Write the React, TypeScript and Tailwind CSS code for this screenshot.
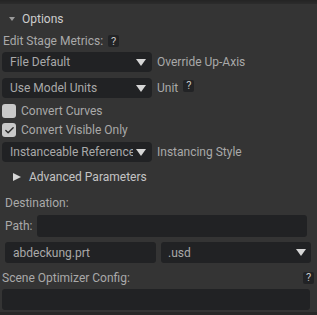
import { Check } from 'lucide-react';

const Arrow = () => (
  <svg width="10" height="7" viewBox="0 0 10 7" className="shrink-0">
    <path d="M0 0 L10 0 L5 7 Z" fill="#d6d6d6" />
  </svg>
);

const Help = () => (
  <span className="inline-flex h-[12px] w-[11px] items-center justify-center rounded-[2px] bg-[#222325] text-[11px] leading-none text-[#c8c8c8]">
    ?
  </span>
);

function Combo({ text, width = 'w-[150px]' }: { text: string; width?: string }) {
  return (
    <div className={`${width} flex h-[20px] shrink-0 items-center gap-[3px] rounded-[4px] bg-[#212224] pl-[8px] pr-[6px]`}>
      <span className="min-w-0 flex-1 overflow-hidden whitespace-nowrap">{text}</span>
      <Arrow />
    </div>
  );
}

function Box({ checked }: { checked?: boolean }) {
  return (
    <span className="flex h-[14px] w-[14px] items-center justify-center rounded-[3px] bg-[#c9c9c9]">
      {checked && <Check size={11} strokeWidth={3} color="#2a2a2a" />}
    </span>
  );
}

export default function App() {
  return (
    <div
      className="flex h-[315px] w-[317px] flex-col overflow-hidden bg-[#343434] text-[12px] text-[#a9a9a9]"
      style={{ fontFamily: 'Roboto, "Liberation Sans", sans-serif' }}
    >
      <div className="h-[4px] shrink-0 bg-gradient-to-b from-[#242424] to-[#2c2c2c]" />

      <div className="mt-[8px] flex h-[14px] items-center gap-[7px] pl-[9px] text-[#cdcdcd]">
        <svg width="6" height="4" viewBox="0 0 6 4">
          <path d="M0 0 L6 0 L3 4 Z" fill="#9a9a9a" />
        </svg>
        <span>Options</span>
      </div>

      <div className="mt-[9px] flex h-[12px] items-center gap-[5px] pl-[3px]">
        <span>Edit Stage Metrics:</span>
        <Help />
      </div>

      <div className="mt-[5px] flex items-center gap-[5px] pl-[2px]">
        <Combo text="File Default" />
        <span>Override Up-Axis</span>
      </div>

      <div className="mt-[6px] flex items-center gap-[5px] pl-[2px]">
        <Combo text="Use Model Units" />
        <span>Unit</span>
        <span className="-mt-[6px]">
          <Help />
        </span>
      </div>

      <div className="mt-[6px] flex h-[14px] items-center gap-[5px] pl-[2px]">
        <Box />
        <span>Convert Curves</span>
      </div>

      <div className="mt-[5px] flex h-[14px] items-center gap-[5px] pl-[2px]">
        <Box checked />
        <span>Convert Visible Only</span>
      </div>

      <div className="mt-[5px] flex items-center gap-[5px] pl-[2px]">
        <Combo text="Instanceable Reference" />
        <span>Instancing Style</span>
      </div>

      <div className="mt-[10px] flex h-[10px] items-center gap-[8px] pl-[13px] text-[#c4c4c4]">
        <svg width="8" height="8" viewBox="0 0 8 8">
          <path d="M0 0 L8 4 L0 8 Z" fill="#d6d6d6" />
        </svg>
        <span>Advanced Parameters</span>
      </div>

      <div className="mt-[16px] flex h-[10px] items-center pl-[5px]">Destination:</div>

      <div className="mt-[7px] flex items-center gap-[5px] pl-[5px] pr-[10px]">
        <span>Path:</span>
        <div className="h-[22px] flex-1 rounded-[3px] bg-[#212224]" />
      </div>

      <div className="mt-[5px] flex items-center gap-[5px] pl-[5px] pr-[6px]">
        <div className="flex h-[21px] w-[151px] items-center rounded-[3px] bg-[#212224] pl-[8px]">abdeckung.prt</div>
        <div className="flex h-[21px] flex-1 items-center justify-between rounded-[3px] bg-[#212224] pl-[7px] pr-[5px]">
          <span>.usd</span>
          <Arrow />
        </div>
      </div>

      <div className="mt-[8px] flex h-[13px] items-center justify-between pl-[2px] pr-[3px]">
        <span>Scene Optimizer Config:</span>
        <Help />
      </div>

      <div className="mt-[5px] ml-[2px] mr-[7px] h-[21px] rounded-[3px] bg-[#212224]" />
      <div className="mt-auto h-[3px] bg-[#282828]" />
    </div>
  );
}
